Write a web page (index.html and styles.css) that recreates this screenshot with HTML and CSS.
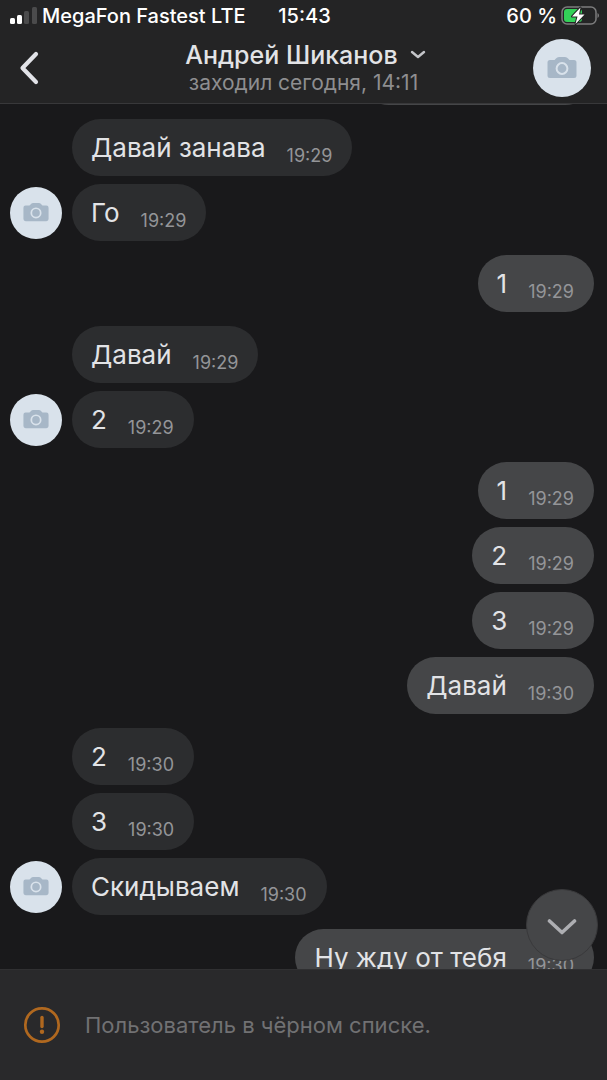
FILE: index.html
```html
<!DOCTYPE html>
<html lang="ru">
<head>
    <meta charset="utf-8">
    <meta name="viewport" content="width=device-width, initial-scale=1">
    <title>Андрей Шиканов</title>
    <link rel="stylesheet" href="styles.css">
</head>
<body>
    <!-- Shared icon -->
    <svg class="sprite" aria-hidden="true">
        <symbol id="camera" viewBox="0 0 30 24">
            <path fill="#a7b7c7" d="M9 2.5Q10 1 12 1h6q2 0 3 1.500L22.500 4H27q2.500 0 2.500 2.500v13q0 2.500-2.500 2.500H3Q.5 22 .5 19.500v-13Q.5 4 3 4h4.500z"/>
            <circle cx="15" cy="12.500" r="5.400" fill="none" stroke="#d9e2eb" stroke-width="2"/>
        </symbol>
    </svg>

    <header class="header">
        <div class="status">
            <div class="carrier">
                <svg class="signal" width="28" height="18" viewBox="0 0 28 18">
                    <rect x="0" y="11" width="5" height="6" rx="1.500" fill="#fff"/>
                    <rect x="7" y="8" width="5" height="9" rx="1.500" fill="#fff"/>
                    <rect x="14" y="4" width="5" height="13" rx="1.500" fill="#4b4b4c"/>
                    <rect x="22" y="0" width="5" height="17" rx="1.500" fill="#4b4b4c"/>
                </svg>
                <span>MegaFon Fastest LTE</span>
            </div>
            <span>15:43</span>
            <div class="charge">
                <span>60 %</span>
                <svg width="38" height="20" viewBox="0 0 38 20">
                    <rect x="1" y="1" width="34" height="17" rx="5" fill="none" stroke="#7c7c7d" stroke-width="1.500"/>
                    <path d="M36.500 7v5q1.500-.8 1.500-2.500t-1.500-2.500z" fill="#7c7c7d"/>
                    <rect x="3" y="3" width="18" height="13" rx="3" fill="#33d158"/>
                    <path d="M19.500 1.500L11 10.500h5.500L14.500 18 23.500 8.500h-5.500z" fill="#fff" stroke="#242425" stroke-width="2" paint-order="stroke" stroke-linejoin="round"/>
                </svg>
            </div>
        </div>
        <div class="topbar">
            <button class="back" aria-label="Назад">
                <svg width="20" height="34" viewBox="0 0 20 34"><path d="M17 3L3.500 17 17 31" fill="none" stroke="#e2e3e8" stroke-width="4.200" stroke-linecap="round" stroke-linejoin="round"/></svg>
            </button>
            <div class="peer">
                <button class="peer-name">Андрей Шиканов
                    <svg width="16" height="10" viewBox="0 0 16 10"><path d="M2 2l6 5 6-5" fill="none" stroke="#c4c5c9" stroke-width="2.400" stroke-linecap="round" stroke-linejoin="round"/></svg>
                </button>
                <div class="peer-seen">заходил сегодня, 14:11</div>
            </div>
            <button class="avatar avatar-big" aria-label="Профиль"><svg><use href="#camera"/></svg></button>
        </div>
    </header>

    <main class="chat">
        <div class="messages">
            <div class="group out"><div class="bubble earlier"></div></div>
            <div class="group in">
                <div class="bubble">Давай занава <time>19:29</time></div>
                <div class="row"><div class="avatar"><svg><use href="#camera"/></svg></div><div class="bubble">Го <time>19:29</time></div></div>
            </div>
            <div class="group out">
                <div class="bubble">1 <time>19:29</time></div>
            </div>
            <div class="group in">
                <div class="bubble">Давай <time>19:29</time></div>
                <div class="row"><div class="avatar"><svg><use href="#camera"/></svg></div><div class="bubble">2 <time>19:29</time></div></div>
            </div>
            <div class="group out">
                <div class="bubble">1 <time>19:29</time></div>
                <div class="bubble">2 <time>19:29</time></div>
                <div class="bubble">3 <time>19:29</time></div>
                <div class="bubble">Давай <time>19:30</time></div>
            </div>
            <div class="group in">
                <div class="bubble">2 <time>19:30</time></div>
                <div class="bubble">3 <time>19:30</time></div>
                <div class="row"><div class="avatar"><svg><use href="#camera"/></svg></div><div class="bubble">Скидываем <time>19:30</time></div></div>
            </div>
            <div class="group out">
                <div class="bubble">Ну жду от тебя <time>19:30</time></div>
            </div>
        </div>
        <button class="scroll-down" aria-label="Вниз">
            <svg width="30" height="18" viewBox="0 0 30 18"><path d="M2.500 3L15 14.500 27.500 3" fill="none" stroke="#adaeb2" stroke-width="3.600" stroke-linecap="round" stroke-linejoin="round"/></svg>
        </button>
    </main>

    <footer class="blocked">
        <svg width="38" height="38" viewBox="0 0 38 38">
            <circle cx="19" cy="19" r="16.700" fill="none" stroke="#b0681f" stroke-width="2.700"/>
            <path d="M19 11.500v9" stroke="#b0681f" stroke-width="3.400" stroke-linecap="round"/>
            <circle cx="19" cy="25.800" r="2.200" fill="#b0681f"/>
        </svg>
        <span>Пользователь в чёрном списке.</span>
    </footer>
</body>
</html>
```

FILE: styles.css
```css
* {
    box-sizing: border-box;
}

body {
    margin: 0;
    height: 100vh;
    display: flex;
    flex-direction: column;
    overflow: hidden;
    background-color: #19191b;
    color: #e2e3e6;
    font-family: Inter, "Liberation Sans", sans-serif;
}

button {
    padding: 0;
    border: none;
    background: none;
    color: inherit;
    font: inherit;
    cursor: pointer;
}

svg {
    display: block;
    flex-shrink: 0;
}

.sprite {
    position: absolute;
    width: 0;
    height: 0;
}

/* Header */
.header {
    flex-shrink: 0;
    background-color: #242425;
    border-bottom: 1px solid #38383a;
}

.status {
    display: grid;
    grid-template-columns: 1fr auto 1fr;
    align-items: center;
    height: 32px;
    padding: 0 8px 0 10px;
    color: #fff;
    font-size: 20px;
    font-weight: 500;
}

.carrier,
.charge {
    display: flex;
    align-items: center;
    gap: 4px;
    white-space: nowrap;
}

.charge {
    justify-content: flex-end;
}

.topbar {
    display: grid;
    grid-template-columns: 58px 1fr 58px;
    align-items: center;
    height: 71px;
    padding: 0 16px;
}

.back {
    width: 26px;
    height: 48px;
    display: flex;
    align-items: center;
    justify-content: center;
}

.peer {
    text-align: center;
}

.peer-name {
    display: inline-flex;
    align-items: center;
    gap: 12px;
    padding-left: 4px;
    font-size: 25px;
    font-weight: 500;
    line-height: 30px;
}

.peer-seen {
    color: #8e8e90;
    font-size: 21px;
    line-height: 26px;
}

.avatar {
    display: flex;
    align-items: center;
    justify-content: center;
    width: 52px;
    height: 52px;
    border-radius: 50%;
    background-color: #d9e2eb;
}

.avatar svg {
    width: 26px;
    height: 21px;
}

.avatar-big {
    width: 58px;
    height: 58px;
}

.avatar-big svg {
    width: 30px;
    height: 24px;
}

/* Messages */
.chat {
    flex: 1;
    min-height: 0;
    position: relative;
    overflow: hidden;
}

.messages {
    display: flex;
    flex-direction: column;
    gap: 14px;
    margin-top: -56px;
    padding: 0 13px 0 10px;
}

.group {
    display: flex;
    flex-direction: column;
    gap: 8px;
}

.in {
    align-items: flex-start;
    padding-left: 62px;
}

.out {
    align-items: flex-end;
}

.row {
    display: flex;
    align-items: center;
    gap: 10px;
    margin-left: -62px;
}

.bubble {
    display: flex;
    align-items: flex-start;
    gap: 21px;
    height: 57px;
    padding: 13px 20px 0 19px;
    border-radius: 29px;
    background-color: #2c2d2f;
    font-size: 26px;
    line-height: 32px;
    white-space: nowrap;
}

.out .bubble {
    background-color: #454648;
}

/* previous message, scrolled under the header */
.earlier {
    width: 40%;
}

.bubble time {
    margin-top: 8px;
    color: #949598;
    font-size: 18px;
}

.scroll-down {
    position: absolute;
    right: 9px;
    bottom: 8px;
    display: flex;
    align-items: center;
    justify-content: center;
    width: 72px;
    height: 72px;
    padding-top: 3px;
    border: 1px solid #39393b;
    border-radius: 50%;
    background-color: #454648;
}

/* Footer */
.blocked {
    flex-shrink: 0;
    display: flex;
    align-items: center;
    gap: 24px;
    height: 111px;
    padding: 0 23px;
    border-top: 1px solid #303032;
    background-color: #29292b;
    color: #717173;
    font-size: 22px;
}
```
